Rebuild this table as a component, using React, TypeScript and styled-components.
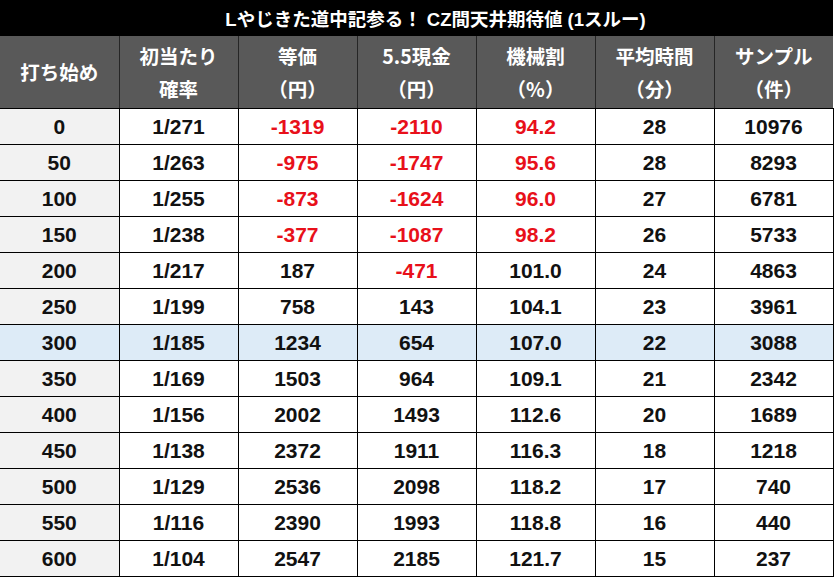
import React from "react";
import styled, { createGlobalStyle } from "styled-components";

const Global = createGlobalStyle`
  html, body { margin: 0; padding: 0; background: #ffffff; }
  body { font-family: "Liberation Sans", "Noto Sans CJK JP", sans-serif; }
`;

const Wrap = styled.div`
  width: 834px;
  height: 577px;
  overflow: hidden;
  background: #ffffff;
`;

const Table = styled.table`
  border-collapse: collapse;
  table-layout: fixed;
  width: 833px;
`;

const TitleCell = styled.th`
  height: 36px;
  box-sizing: border-box;
  padding: 0 0 0 38px;
  background: #000000;
  color: #ffffff;
  font-family: "Liberation Sans", "Noto Sans CJK JP", sans-serif;
  font-weight: 700;
  font-size: 18.5px;
  text-align: center;
  vertical-align: middle;
`;

const HeadCell = styled.th`
  height: 72px;
  box-sizing: border-box;
  padding: 0;
  background: #595959;
  color: #ffffff;
  font-family: "Noto Sans CJK JP", sans-serif;
  font-weight: 700;
  font-size: 19.5px;
  line-height: 33px;
  text-align: center;
  vertical-align: middle;
  border-left: 1px solid #262626;
  border-bottom: 1px solid #000;
  &:first-child { border-left: none; }
`;

const Row = styled.tr<{ $hl?: boolean }>`
  background: ${(p) => (p.$hl ? "#ddebf7" : "#ffffff")};
`;

const Cell = styled.td<{ $red?: boolean; $first?: boolean; $hl?: boolean }>`
  height: 36px;
  box-sizing: border-box;
  padding: 1px 0 0;
  text-align: center;
  vertical-align: middle;
  font-family: "Liberation Sans", "Noto Sans CJK JP", sans-serif;
  font-weight: 700;
  font-size: 21px;
  line-height: 24px;
  color: ${(p) => (p.$red ? "#e8101a" : "#111111")};
  background: ${(p) => (p.$hl ? "#ddebf7" : p.$first ? "#f2f2f2" : "transparent")};
  border-left: ${(p) => (p.$first ? "none" : "1px solid #000")};
  border-right: 1px solid #000;
  border-bottom: 1px solid #000;
`;

type R = [string, string, string, string, string, string, string];

const rows: R[] = [
  ["0", "1/271", "-1319", "-2110", "94.2", "28", "10976"],
  ["50", "1/263", "-975", "-1747", "95.6", "28", "8293"],
  ["100", "1/255", "-873", "-1624", "96.0", "27", "6781"],
  ["150", "1/238", "-377", "-1087", "98.2", "26", "5733"],
  ["200", "1/217", "187", "-471", "101.0", "24", "4863"],
  ["250", "1/199", "758", "143", "104.1", "23", "3961"],
  ["300", "1/185", "1234", "654", "107.0", "22", "3088"],
  ["350", "1/169", "1503", "964", "109.1", "21", "2342"],
  ["400", "1/156", "2002", "1493", "112.6", "20", "1689"],
  ["450", "1/138", "2372", "1911", "116.3", "18", "1218"],
  ["500", "1/129", "2536", "2098", "118.2", "17", "740"],
  ["550", "1/116", "2390", "1993", "118.8", "16", "440"],
  ["600", "1/104", "2547", "2185", "121.7", "15", "237"],
];

const headers: string[][] = [
  ["打ち始め"],
  ["初当たり", "確率"],
  ["等価", "（円）"],
  ["5.5現金", "（円）"],
  ["機械割", "（%）"],
  ["平均時間", "（分）"],
  ["サンプル", "（件）"],
];

const isRed = (col: number, v: string) => {
  if (col === 2 || col === 3) return v.startsWith("-");
  if (col === 4) return parseFloat(v) < 100;
  return false;
};

export default function App() {
  return (
    <Wrap>
      <Global />
      <Table>
        <colgroup>
          {headers.map((_, i) => (
            <col key={i} style={{ width: 119 }} />
          ))}
        </colgroup>
        <thead>
          <tr>
            <TitleCell colSpan={7}>Lやじきた道中記参る！ CZ間天井期待値 (1スルー)</TitleCell>
          </tr>
          <tr>
            {headers.map((h, i) => (
              <HeadCell key={i}>
                {h.map((line, j) => (
                  <div key={j}>{line}</div>
                ))}
              </HeadCell>
            ))}
          </tr>
        </thead>
        <tbody>
          {rows.map((r, ri) => {
            const hl = r[0] === "300";
            return (
              <Row key={ri} $hl={hl}>
                {r.map((v, ci) => (
                  <Cell key={ci} $first={ci === 0} $hl={hl} $red={isRed(ci, v)}>
                    {v}
                  </Cell>
                ))}
              </Row>
            );
          })}
        </tbody>
      </Table>
    </Wrap>
  );
}
